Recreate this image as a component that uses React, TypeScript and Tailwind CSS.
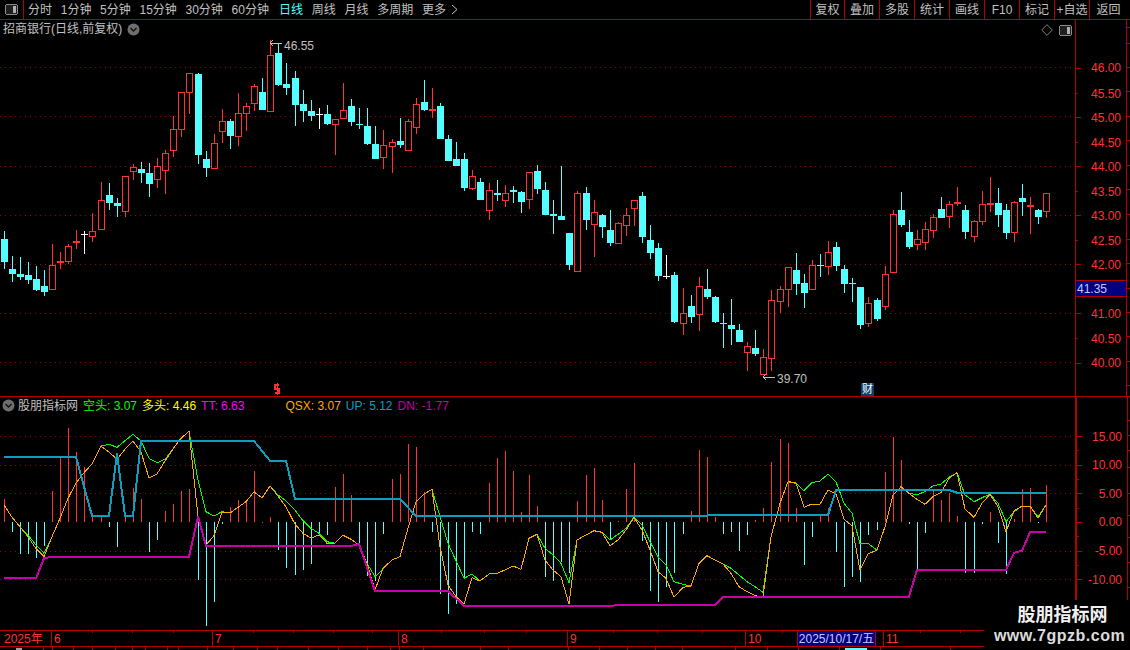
const LINE = '#b40000';
const RED = '#ff3232';
const CYAN = '#54ffff';

type Kind = 'c' | 'r' | 'rd' | 'cd' | 'w';
type Row = [number, number, number, number, Kind];

// candle rows are read off 3x crops, so y = offset + value / 3
const toPage = (offset: number, rows: Row[]): Row[] =>
  rows.map(([hi, top, bot, lo, kind]) => [
    Math.round(offset + hi / 3),
    Math.round(offset + top / 3),
    Math.round(offset + bot / 3),
    Math.round(offset + lo / 3),
    kind,
  ]);

const candles: Row[] = [
  ...toPage(40, [
    [573, 597, 666, 687, 'c'], [648, 687, 702, 726, 'c'], [652, 702, 711, 720, 'c'], [666, 705, 720, 732, 'c'],
    [678, 717, 750, 752, 'c'], [690, 738, 756, 768, 'c'], [612, 676, 749, 750, 'r'], [636, 663, 669, 687, 'rd'],
    [612, 619, 665, 672, 'r'], [570, 603, 609, 627, 'rd'], [573, 582, 583, 642, 'w'], [519, 574, 590, 606, 'r'],
    [426, 481, 569, 570, 'r'], [429, 465, 489, 510, 'c'], [474, 489, 498, 531, 'c'], [408, 409, 515, 531, 'r'],
    [372, 382, 395, 420, 'r'], [366, 387, 399, 429, 'c'], [369, 399, 432, 471, 'c'], [354, 379, 419, 444, 'r'],
    [330, 340, 392, 462, 'r'], [228, 268, 332, 351, 'r'], [156, 157, 269, 291, 'r'], [99, 100, 158, 222, 'r'],
    [99, 102, 345, 372, 'c'], [333, 357, 384, 411, 'c'], [282, 310, 386, 387, 'r'], [207, 244, 275, 309, 'r'],
    [237, 243, 288, 327, 'c'], [159, 220, 290, 318, 'r'], [189, 199, 221, 273, 'r'], [132, 139, 191, 213, 'r'],
    [114, 156, 210, 210, 'c'], [0, 46, 215, 216, 'r'], [9, 39, 135, 138, 'c'],
    [69, 132, 144, 165, 'c'], [93, 114, 195, 258, 'c'], [150, 192, 213, 246, 'c'], [180, 213, 228, 243, 'c'],
    [204, 222, 223, 267, 'w'], [195, 222, 252, 255, 'c'], [237, 238, 254, 345, 'r'], [129, 211, 236, 237, 'r'],
    [177, 198, 246, 258, 'c'], [204, 252, 255, 267, 'cd'], [204, 258, 312, 315, 'c'], [258, 312, 357, 357, 'c'],
    [270, 316, 353, 387, 'r'], [297, 307, 320, 399, 'r'], [234, 303, 315, 324, 'c'], [237, 244, 332, 333, 'r'],
    [174, 193, 263, 282, 'r'], [120, 186, 210, 213, 'c'], [144, 207, 213, 234, 'rd'], [189, 198, 297, 297, 'c'],
    [285, 297, 363, 363, 'c'], [306, 357, 378, 378, 'c'], [339, 357, 444, 453, 'c'], [390, 409, 446, 450, 'r'],
    [414, 426, 480, 480, 'c'], [429, 451, 512, 540, 'r'], [420, 459, 465, 483, 'cd'], [435, 460, 482, 501, 'r'],
    [438, 450, 456, 489, 'cd'], [453, 456, 486, 519, 'c'], [397, 397, 479, 507, 'r'], [375, 393, 447, 462, 'c'],
    [426, 450, 525, 525, 'c'], [480, 522, 528, 582, 'cd'],
  ]),
  ...toPage(160, [
    [18, 168, 180, 180, 'c'], [219, 219, 315, 330, 'c'], [93, 100, 335, 336, 'r'], [81, 99, 180, 210, 'c'],
    [120, 157, 194, 291, 'r'], [162, 165, 201, 234, 'c'], [150, 210, 249, 258, 'c'], [186, 190, 251, 252, 'r'],
    [144, 166, 197, 228, 'r'], [120, 121, 146, 198, 'r'], [96, 108, 231, 249, 'c'], [195, 240, 279, 297, 'c'],
    [249, 264, 348, 363, 'c'], [285, 348, 349, 357, 'w'], [336, 345, 486, 489, 'c'], [384, 460, 491, 525, 'r'],
    [405, 438, 471, 489, 'c'], [351, 379, 464, 513, 'r'], [327, 387, 411, 417, 'c'], [408, 411, 486, 489, 'c'],
    [459, 489, 492, 564, 'cd'], [417, 495, 507, 555, 'c'], [492, 510, 546, 546, 'c'], [546, 559, 578, 633, 'r'],
    [510, 564, 582, 588, 'c'], [567, 592, 644, 645, 'r'], [390, 421, 596, 633, 'r'], [378, 388, 425, 459, 'r'],
    [321, 322, 389, 441, 'r'], [279, 330, 372, 405, 'c'], [342, 369, 399, 444, 'c'], [300, 316, 389, 390, 'r'],
    [282, 315, 318, 351, 'cd'], [243, 277, 320, 345, 'r'], [246, 261, 318, 333, 'c'], [315, 327, 372, 399, 'c'],
    [354, 369, 372, 426, 'cd'], [381, 381, 495, 507, 'c'], [411, 430, 491, 501, 'r'], [414, 420, 477, 483, 'c'],
    [318, 343, 440, 450, 'r'], [150, 163, 338, 339, 'r'], [96, 150, 195, 201, 'c'], [180, 216, 261, 267, 'c'],
    [210, 238, 254, 270, 'r'], [186, 208, 248, 270, 'r'], [162, 172, 212, 234, 'r'], [111, 147, 174, 174, 'c'],
    [123, 133, 170, 204, 'r'], [81, 126, 132, 138, 'rd'], [135, 150, 216, 237, 'c'], [180, 184, 231, 246, 'r'],
    [93, 133, 185, 195, 'r'], [51, 129, 135, 156, 'rd'], [84, 129, 165, 201, 'c'], [132, 150, 219, 237, 'c'],
    [123, 127, 218, 246, 'r'], [72, 114, 126, 168, 'c'], [111, 135, 141, 222, 'rd'], [147, 150, 171, 192, 'c'],
    [99, 100, 155, 174, 'r'],
  ]),
];

const barX = (i: number) => Math.floor(4 + i * 8.0835 + 0.001);

// indicator series: three crops with different offsets
const crops = (a: number[], b: number[], c: number[]) => [
  ...a.map((v) => 390 + v / 3),
  ...b.map((v) => 400 + v / 3),
  ...c.map((v) => 400 + v / 3),
];

const histogram = crops(
  [327, 426, 492, 492, 503, 468, 303, 204, 114, 186, 231, 370, 380, 411, 471, 380, 294, 327, 486, 450, 363, 342, 303, 297, 570, 708, 636, 402, 351, 330, 330, 243, 395, 381, 480, 534, 555, 540, 522, 435, 435, 291, 252, 315, 460, 558, 573],
  [402, 237, 222, 132, 141, 277, 396, 582, 642, 612, 537, 396, 402, 249, 174, 153, 213, 336, 225, 318, 531, 543, 486, 519, 303, 225, 204, 300, 420, 363, 267, 189, 423, 573, 606, 561, 519, 402, 333, 150, 171, 351, 402, 396, 453, 405, 360],
  [324, 186, 117, 129, 324, 495, 411, 342, 324, 456, 561, 531, 546, 405, 390, 216, 111, 180, 372, 510, 399, 270, 300, 279, 348, 519, 519, 372, 336, 429, 522, 357, 267, 264, 369, 255],
);

const orange = crops(
  [345, 382, 410, 440, 476, 500, 440, 385, 325, 280, 248, 222, 168, 186, 208, 178, 153, 186, 264, 252, 213, 177, 145, 124, 380, 465, 437, 367, 369, 352, 335, 305, 324, 288, 318, 350, 403, 430, 444, 435, 460, 460, 436, 448, 465, 520, 600],
  [505, 480, 470, 385, 305, 282, 268, 440, 555, 590, 612, 533, 543, 522, 520, 510, 498, 508, 415, 403, 480, 510, 530, 612, 420, 405, 392, 397, 438, 420, 390, 352, 390, 450, 515, 535, 592, 562, 558, 490, 467, 480, 492, 520, 560, 575, 587],
  [590, 410, 310, 245, 248, 322, 312, 313, 270, 282, 357, 378, 510, 462, 450, 380, 285, 260, 280, 298, 313, 290, 278, 235, 218, 327, 352, 310, 283, 320, 395, 333, 318, 318, 355, 315],
);

const green = crops(
  [345, 382, 410, 435, 465, 490, 440, 385, 325, 280, 248, 222, 168, 163, 172, 152, 133, 153, 205, 218, 208, 177, 145, 124, 270, 365, 378, 365, 369, 352, 335, 305, 324, 288, 315, 332, 360, 392, 415, 430, 455, 460, 436, 448, 465, 520, 560],
  [507, 480, 470, 385, 305, 282, 268, 350, 430, 482, 535, 522, 543, 522, 520, 510, 498, 508, 415, 403, 445, 465, 490, 548, 420, 405, 392, 397, 420, 403, 385, 352, 375, 425, 470, 495, 545, 553, 558, 490, 467, 480, 492, 505, 525, 545, 560],
  [577, 410, 310, 245, 250, 272, 248, 243, 222, 245, 310, 340, 432, 430, 450, 380, 285, 260, 280, 284, 275, 258, 252, 232, 218, 285, 305, 293, 283, 310, 365, 335, 318, 318, 350, 315],
);

const series = (values: number[]) => values.map((y, i) => `${barX(i)},${y.toFixed(1)}`).join(' ');

// [bar index, y] knots, y in page px
const knots = (rows: [number, number][]) => rows.map(([i, y]) => `${barX(i)},${y.toFixed(1)}`).join(' ');
const z7 = (v: number) => 390 + v / 3;
const z8 = (v: number) => 400 + v / 3;

const upLine = knots([
  [0, z7(201)], [9, z7(201)], [11, z7(378)], [13, z7(378)], [14, z7(190)], [15, z7(378)], [16, z7(378)], [17, z7(153)],
  [31, z7(153)], [33, z7(212)], [35, z7(212)], [36, z7(326)], [49, z8(296)], [51, z8(348)], [102, z8(346)], [103, z8(270)],
  [117, z8(270)], [118, z8(278)], [129, z8(278)],
]);

const dnLine = knots([
  [0, z7(565)], [4, z7(565)], [5, z7(505)], [6, z7(500)], [23, z7(500)], [24, z7(380)], [25, z7(468)], [43, z7(468)],
  [44, z7(462)], [46, z7(603)], [55, z8(573)], [57, z8(618)], [75, z8(618)], [76, z8(615)], [88, z8(615)], [89, z8(590)],
  [112, z8(590)], [113, z8(510)], [124, z8(510)], [125, z8(458)], [126, z8(452)], [127, z8(397)], [129, z8(396)],
]);

const DotLine = ({ y }: { y: number }) => (
  <line x1={0} x2={1075} y1={y + 0.5} y2={y + 0.5} stroke="#a00000" strokeDasharray="1 4" />
);

const PaneIcon = () => (
  <svg width="13" height="11" viewBox="0 0 13 11" shapeRendering="crispEdges">
    <rect x="0.5" y="0.5" width="12" height="10" rx="2" fill="#202020" stroke="#8a8a8a" />
    <rect x="8" y="2" width="3" height="7" fill="#b0b0b0" />
  </svg>
);

const DropIcon = () => (
  <svg width="13" height="13" viewBox="0 0 13 13">
    <circle cx="6.5" cy="6.5" r="6" fill="#6e6e6e" />
    <polyline points="3.5,5 6.5,8 9.5,5" fill="none" stroke="#111" strokeWidth="1.4" />
  </svg>
);

const periods = ['分时', '1分钟', '5分钟', '15分钟', '30分钟', '60分钟', '日线', '周线', '月线', '多周期'];
const tools = [
  { label: '复权', w: 'w-[34px]' },
  { label: '叠加', w: 'w-[35px]' },
  { label: '多股', w: 'w-[35px]' },
  { label: '统计', w: 'w-[35px]' },
  { label: '画线', w: 'w-[35px]' },
  { label: 'F10', w: 'w-[35px]' },
  { label: '标记', w: 'w-[35px]' },
  { label: '+自选', w: 'w-[35px]' },
  { label: '返回', w: 'w-[41px] pr-[3px]' },
];

const Toolbar = () => (
  <div className="flex h-[20px] shrink-0 items-center border-b border-[#b40000]">
    <div className="flex h-full w-[24px] items-center justify-center border-r border-[#b40000]">
      <PaneIcon />
    </div>
    <div className="ml-[4px] flex items-center gap-[8.7px]">
      {periods.map((p) => (
        <span key={p} className={p === '日线' ? 'ml-[1.5px] text-[#54ffff]' : ''}>
          {p}
        </span>
      ))}
      <span className="flex items-center gap-[5px]">
        更多
        <svg width="7" height="11" viewBox="0 0 7 11">
          <polyline points="1,1 6,5.5 1,10" fill="none" stroke="#c0c0c0" />
        </svg>
      </span>
    </div>
    <div className="ml-auto flex h-full">
      {tools.map((t) => (
        <div key={t.label} className={`flex h-full items-center justify-center border-l border-[#b40000] ${t.w}`}>
          {t.label}
        </div>
      ))}
    </div>
  </div>
);

// 41.50 sits under the last-price box, the reference shows no label there
const priceRows = ['46.00', '45.50', '45.00', '44.50', '44.00', '43.50', '43.00', '42.50', '42.00', '', '41.00', '40.50', '40.00'];
const indicatorRows = ['15.00', '', '10.00', '', '5.00', '', '0.00', '', '-5.00', '', '-10.00'];

const AxisRow = ({ label, major, h }: { label: string; major: boolean; h: string }) => (
  <div className={`flex items-center justify-between pr-[5px] text-[#ff3232] ${h}`}>
    <span className={`h-px bg-[#b40000] ${major ? 'w-[5px]' : 'w-[2px]'}`} />
    <span className={major ? 'leading-none' : 'translate-y-[1px] leading-none'}>{label}</span>
  </div>
);

const StripTicks = ({ ticks, h }: { ticks: number[]; h: number }) => (
  <svg width="4" height={h} viewBox={`0 0 4 ${h}`} shapeRendering="crispEdges">
    {ticks.map((y) => (
      <rect key={y} x="0" y={y} width="3" height="1" fill={LINE} />
    ))}
  </svg>
);

const KlineChart = () => (
  <svg className="absolute inset-0" width="1075" height="376" viewBox="0 20 1075 376" shapeRendering="crispEdges">
    {[67, 116, 166, 215, 264, 313, 362].map((y) => (
      <DotLine key={y} y={y} />
    ))}
    {candles.map(([hi, top, bot, lo, kind], i) => {
      const x = barX(i);
      const color = kind === 'r' || kind === 'rd' ? RED : kind === 'w' ? '#ffffff' : CYAN;
      if (kind === 'r') {
        return (
          <g key={i} stroke={color} fill="none">
            <line x1={x + 0.5} x2={x + 0.5} y1={hi} y2={top} />
            <line x1={x + 0.5} x2={x + 0.5} y1={bot} y2={lo} />
            <rect x={x - 2.5} y={top + 0.5} width={6} height={Math.max(bot - top - 1, 1)} />
          </g>
        );
      }
      return (
        <g key={i} fill={color}>
          <rect x={x} y={hi} width={1} height={lo - hi} />
          <rect x={x - 3} y={top} width={7} height={Math.max(bot - top, 1)} />
        </g>
      );
    })}
    <g stroke="#c0c0c0" fill="none">
      <polyline points="270,43 282,43" />
      <polyline points="273,40 270,43 273,46" />
      <polyline points="763,377 775,377" />
      <polyline points="766,374 763,377 766,380" />
    </g>
    <g fill="none" stroke={RED}>
      <polyline points="279,385 275,385 275,389 279,389 279,393 275,393" strokeWidth="1.5" />
      <line x1="277.5" x2="277.5" y1="383" y2="395" />
    </g>
  </svg>
);

const KlinePane = () => (
  <div className="flex h-[377px] shrink-0 border-b border-[#b40000]">
    <div className="relative w-[1075px] shrink-0">
      <KlineChart />
      <div className="absolute left-[3px] top-0 flex h-[18px] items-center gap-[5px]">
        <span>招商银行(日线,前复权)</span>
        <DropIcon />
      </div>
      <div className="absolute left-[1041px] top-[4px] flex items-center gap-[6px]">
        <svg width="12" height="12" viewBox="0 0 12 12">
          <polygon points="6,0.7 11.3,6 6,11.3 0.7,6" fill="none" stroke="#808080" />
        </svg>
        <PaneIcon />
      </div>
      <span className="absolute left-[284px] top-[20px] leading-[12px]">46.55</span>
      <span className="absolute left-[777px] top-[353px] leading-[12px]">39.70</span>
      <span className="absolute left-[861px] top-[363px] flex h-[13px] w-[13px] items-center justify-center bg-[#0a3f70] text-[11px] leading-none text-white">
        财
      </span>
    </div>
    <div className="relative w-[51px] shrink-0 border-l border-[#b40000] pt-[36.2px]">
      {priceRows.map((p, i) => (
        <AxisRow key={i} label={p} major={i % 2 === 0} h="h-[24.55px]" />
      ))}
      <div className="absolute left-0 right-0 top-[260px] flex h-[17px] items-center border-y border-[#b40000] bg-[#000080] pl-px text-[#c8c8ff]">
        41.35
      </div>
    </div>
    <div className="w-[4px] shrink-0 border-l border-[#b40000]">
      <StripTicks ticks={[7, 23, 47, 71, 96, 120, 145, 169, 194, 219, 243, 268, 292, 316, 341, 365]} h={376} />
    </div>
  </div>
);

const readouts = [
  { text: '空头: 3.07', color: 'text-[#00ff00]' },
  { text: '多头: 4.46', color: 'text-[#ffff00]' },
  { text: 'TT: 6.63', color: 'text-[#ff00ff]' },
  { text: 'QSX: 3.07', color: 'ml-[36px] text-[#ffa800]' },
  { text: 'UP: 5.12', color: 'text-[#0d9dbf]' },
  { text: 'DN: -1.77', color: 'text-[#c800a8]' },
];

const IndicatorChart = () => (
  <svg className="absolute inset-0" width="1075" height="233" viewBox="0 397 1075 233" shapeRendering="crispEdges">
    {[436, 465, 493, 551, 579].map((y) => (
      <DotLine key={y} y={y} />
    ))}
    {histogram.map((y, i) => (
      <rect
        key={i}
        x={barX(i)}
        y={Math.min(y, 522)}
        width={1}
        height={Math.max(Math.abs(y - 522), 1)}
        fill={y < 522 ? RED : CYAN}
      />
    ))}
    <polyline points={series(green)} fill="none" stroke="#00ff00" />
    <polyline points={series(orange)} fill="none" stroke="#ffa800" />
    <polyline points={upLine} fill="none" stroke="#0d9dbf" strokeWidth="2" />
    <polyline points={dnLine} fill="none" stroke="#c800a8" strokeWidth="2" />
  </svg>
);

const IndicatorPane = () => (
  <div className="flex h-[234px] shrink-0 border-b border-[#b40000]">
    <div className="relative w-[1075px] shrink-0">
      <IndicatorChart />
      <div className="absolute left-[2px] top-0 flex h-[17px] items-center gap-[5px]">
        <DropIcon />
        <span className="-ml-[2px]">股朋指标网</span>
        {readouts.map((r) => (
          <span key={r.text} className={r.color}>
            {r.text}
          </span>
        ))}
      </div>
    </div>
    <div className="w-[52px] shrink-0 border-l-2 border-[#b40000] pt-[32.5px]">
      {indicatorRows.map((label, i) => (
        <AxisRow key={i} label={label} major={i % 2 === 0} h="h-[14.3px]" />
      ))}
    </div>
    <div className="w-[3px] shrink-0 border-l border-[#b40000]">
      <StripTicks ticks={[23, 38, 53, 70, 96, 118, 140, 165, 190, 215]} h={233} />
    </div>
  </div>
);

const months = [
  { label: '2025年', w: 'w-[52px] pl-[4px]' },
  { label: '6', w: 'w-[161px] pl-[2px]' },
  { label: '7', w: 'w-[186px] pl-[2px]' },
  { label: '8', w: 'w-[169px] pl-[2px]' },
  { label: '9', w: 'w-[178px] pl-[2px]' },
  { label: '10', w: 'w-[52px] pl-[2px]' },
];

const topTicks = [92, 132, 173, 253, 293, 333, 372, 441, 484, 526, 613, 657, 702, 782, 838, 920, 960];
const bottomTicks = [43, 52, 73, 92, 115, 132, 145, 167, 178, 207, 233, 257, 277, 308, 338, 367, 390, 399, 423, 480, 508, 568, 599, 627, 655, 682, 735, 767, 798, 839, 880, 950];

const TimeAxis = () => (
  <>
    <div className="relative flex h-[16px] shrink-0 border-b border-[#b40000] text-[#ff3232]">
      {months.map((m) => (
        <div key={m.label} className={`flex h-full items-center border-r border-[#b40000] ${m.w}`}>
          {m.label}
        </div>
      ))}
      <div className="flex h-full w-[78px] items-center justify-center border-r border-[#b40000] bg-[#000080] text-[#c8c8ff]">
        2025/10/17/五
      </div>
      <div className="h-full w-[8px] border-r border-[#b40000]" />
      <div className="flex h-full items-center pl-[2px]">11</div>
      <svg className="absolute left-0 top-0" width="984" height="3" shapeRendering="crispEdges">
        {topTicks.map((x) => (
          <rect key={x} x={x} y="0" width="1" height="2" fill={LINE} />
        ))}
      </svg>
    </div>
    <svg className="shrink-0" width="984" height="3" viewBox="0 0 984 3" shapeRendering="crispEdges">
      {bottomTicks.map((x) => (
        <rect key={x} x={x} y="0" width="1" height="3" fill={LINE} />
      ))}
      <rect x="16" y="1" width="6" height="2" fill="#a0a0a0" />
      <rect x="845" y="1" width="22" height="2" fill={CYAN} />
    </svg>
  </>
);

const Watermark = () => (
  <div className="absolute bottom-0 right-0 flex h-[50px] w-[146px] flex-col items-center bg-black pl-[5px] pt-[4px] font-bold text-[#f0f0f0]">
    <span className="ml-[6px] text-[18px] leading-[22px]">股朋指标网</span>
    <span className="text-[16px] leading-[19px] tracking-[0.5px] text-[#dcdcdc]">www.7gpzb.com</span>
  </div>
);

const App = () => (
  <div className="relative flex h-[650px] w-[1130px] flex-col overflow-hidden bg-black font-['Liberation_Sans','Noto_Sans_CJK_SC',sans-serif] text-[12px] text-[#c0c0c0]">
    <Toolbar />
    <KlinePane />
    <IndicatorPane />
    <TimeAxis />
    <Watermark />
  </div>
);

export default App;
